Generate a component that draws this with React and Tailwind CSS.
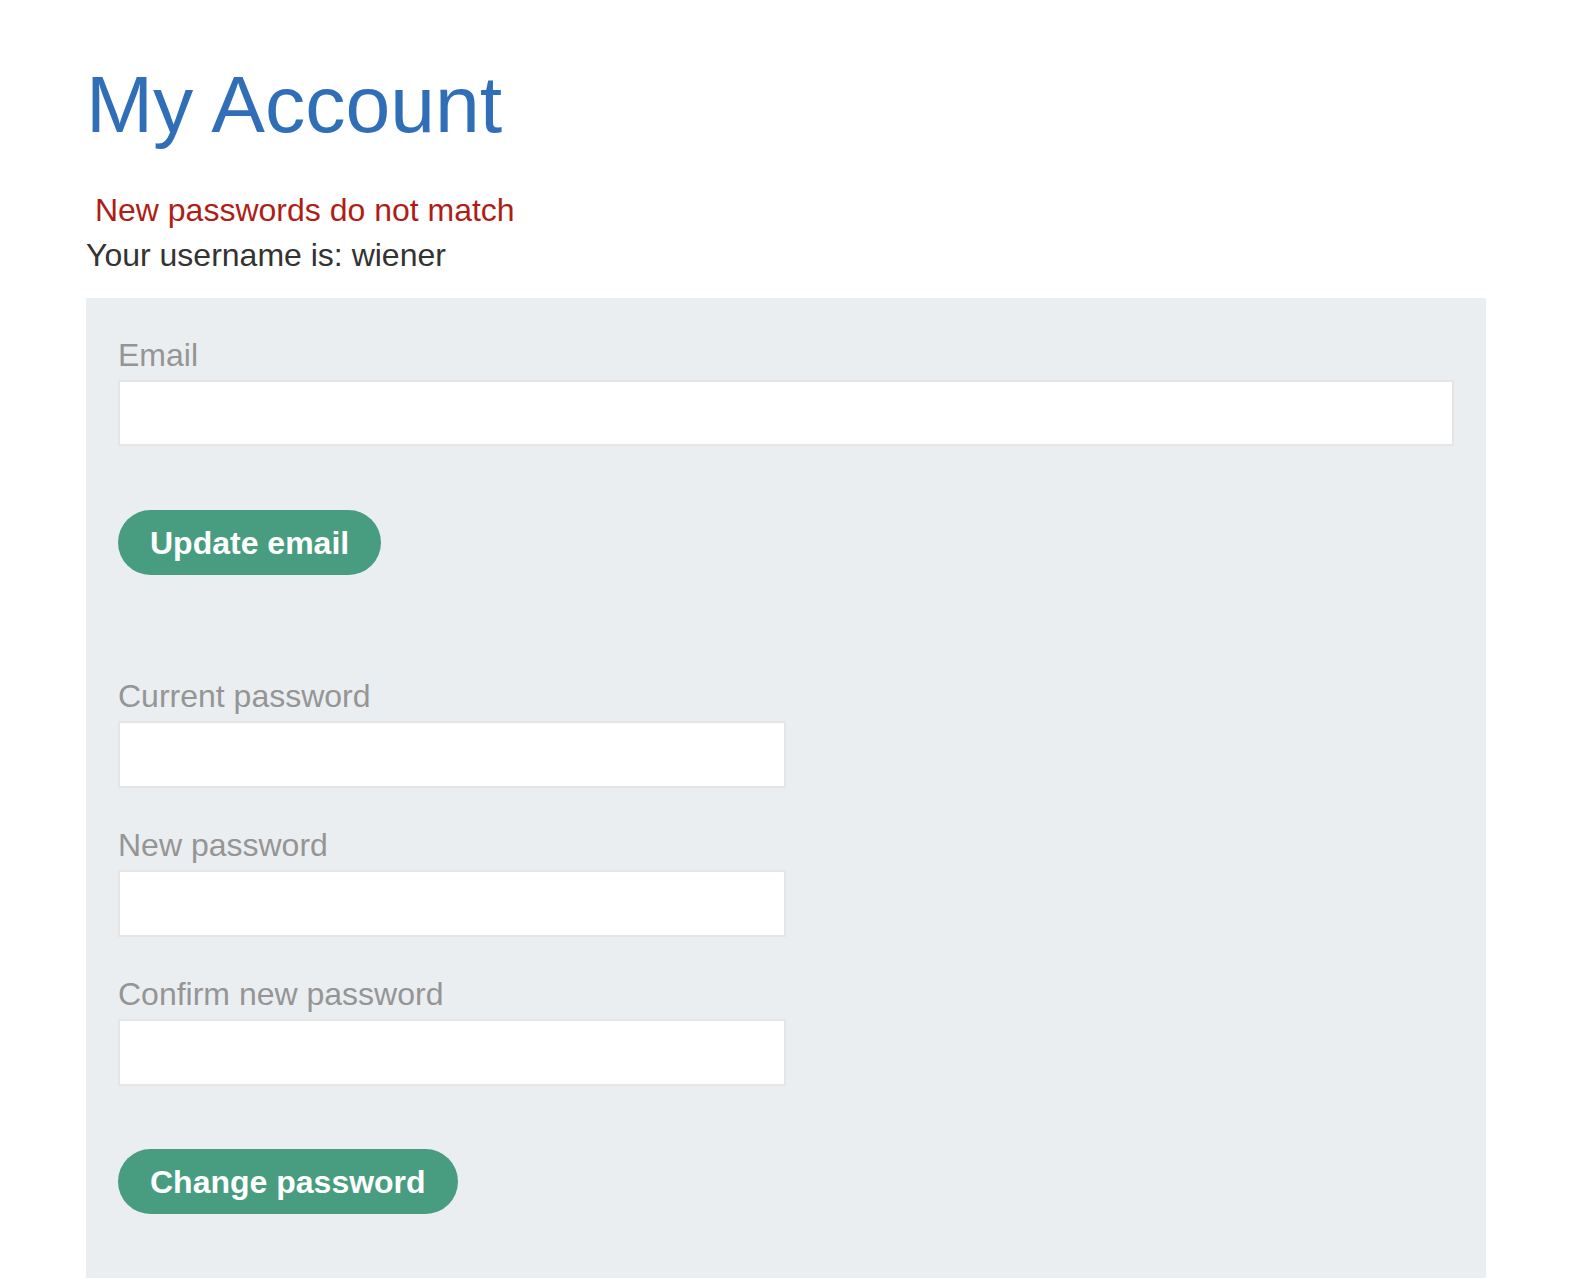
import React from "react";

function Field({ label, wide }) {
  return (
    <div className="flex flex-col">
      <label className="text-[32px] leading-[40px] text-[#959595]">{label}</label>
      <input
        type={label === "Email" ? "email" : "password"}
        className={`mt-[5px] border-2 border-[#e5e5e5] bg-white outline-none ${wide ? "h-[66px] w-full" : "h-[67px] w-[668px]"}`}
      />
    </div>
  );
}

function PillButton({ children }) {
  return (
    <button
      type="button"
      className="flex h-[65px] items-center self-start rounded-full bg-[#489c80] px-8 text-[32px] font-bold leading-none text-white"
    >
      {children}
    </button>
  );
}

export default function App() {
  return (
    <div
      className="min-h-[1288px] bg-white pl-[86px]"
      style={{ fontFamily: '"Liberation Sans", Arial, sans-serif' }}
    >
      <h1 className="pt-[64px] text-[80.5px] leading-[80px] text-[#306fb8]">My Account</h1>
      <p className="mt-[44px] whitespace-pre text-[32px] leading-[45px] text-[#ae1e17]">
        {" New passwords do not match"}
      </p>
      <p className="text-[32px] leading-[45px] text-[#333332]">Your username is: wiener</p>

      <div className="mt-[20px] flex w-[1400px] flex-col bg-[#ebeef1] px-8 pt-[37px] pb-[64px]">
        <Field label="Email" wide />
        <div className="mt-[64px] flex">
          <PillButton>Update email</PillButton>
        </div>

        <div className="mt-[101px]">
          <Field label="Current password" />
        </div>
        <div className="mt-[37px]">
          <Field label="New password" />
        </div>
        <div className="mt-[37px]">
          <Field label="Confirm new password" />
        </div>
        <div className="mt-[63px] flex">
          <PillButton>Change password</PillButton>
        </div>
      </div>
    </div>
  );
}
